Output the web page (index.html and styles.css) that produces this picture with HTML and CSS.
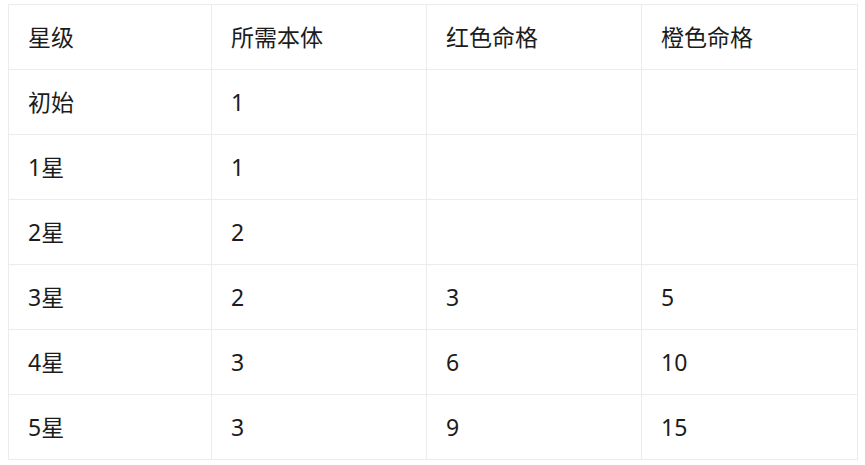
FILE: index.html
```html
<!DOCTYPE html>
<html lang="zh">
<head>
<meta charset="utf-8">
<link rel="stylesheet" href="styles.css">
</head>
<body>
<table class="grid">
  <colgroup>
    <col class="c1"><col class="c2"><col class="c3"><col class="c4">
  </colgroup>
  <tr><td>星级</td><td>所需本体</td><td>红色命格</td><td>橙色命格</td></tr>
  <tr><td>初始</td><td>1</td><td></td><td></td></tr>
  <tr><td>1星</td><td>1</td><td></td><td></td></tr>
  <tr><td>2星</td><td>2</td><td></td><td></td></tr>
  <tr><td>3星</td><td>2</td><td>3</td><td>5</td></tr>
  <tr><td>4星</td><td>3</td><td>6</td><td>10</td></tr>
  <tr><td>5星</td><td>3</td><td>9</td><td>15</td></tr>
</table>
</body>
</html>
```
FILE: styles.css
```css
html, body {
  margin: 0;
  background: #ffffff;
}
body {
  padding: 4px 8px 0 8px;
  font-family: "Noto Sans", "Noto Sans CJK SC", sans-serif;
  color: #1c1c1c;
}
.grid {
  border-collapse: collapse;
  width: 849px;
  table-layout: fixed;
}
.c1 { width: 203px; }
.c2 { width: 215px; }
.c3 { width: 215px; }
.c4 { width: 216px; }
.grid td {
  border: 1px solid #ececec;
  height: 64px;
  padding: 0 0 0 19px;
  font-size: 23px;
  line-height: 30px;
  vertical-align: middle;
}
```
